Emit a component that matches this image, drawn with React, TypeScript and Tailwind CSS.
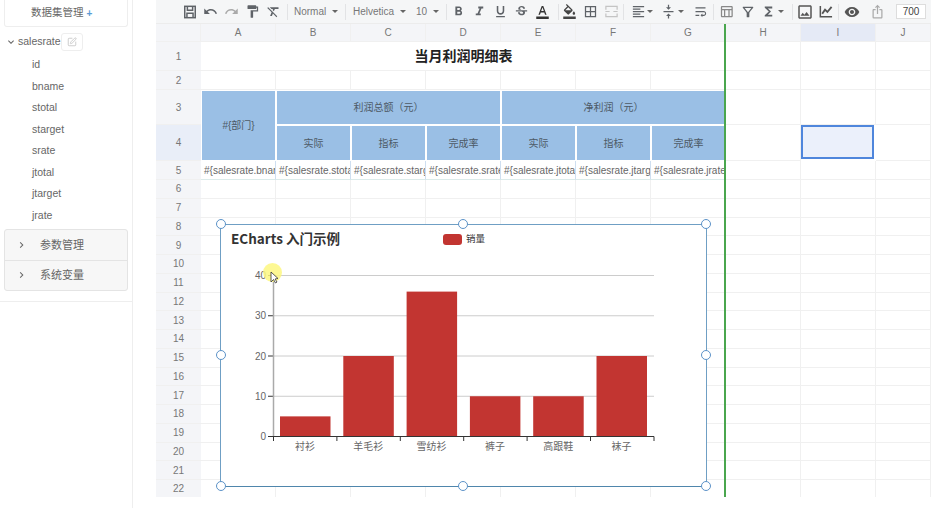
import type { ReactNode } from 'react';
import {
  MdUndo, MdRedo, MdFormatPaint, MdFormatClear, MdFormatBold, MdFormatItalic,
  MdFormatUnderlined, MdStrikethroughS, MdFormatColorText, MdFormatColorFill, MdBorderAll,
  MdFormatAlignLeft, MdVerticalAlignCenter, MdWrapText, MdOutlineTableChart, MdOutlineFilterAlt,
  MdFunctions, MdOutlineImage, MdVisibility, MdOutlineIosShare, MdExpandMore, MdChevronRight,
} from 'react-icons/md';
import { SquarePen } from 'lucide-react';

const FONT = "font-['Liberation_Sans','Noto_Sans_CJK_SC',sans-serif]";
const COLS = ['A', 'B', 'C', 'D', 'E', 'F', 'G', 'H', 'I', 'J'];
const FIELDS = ['id', 'bname', 'stotal', 'starget', 'srate', 'jtotal', 'jtarget', 'jrate'];
const BODY_ROWS = Array.from({ length: 17 }, (_, i) => i + 6);
const BARS = [
  { label: '衬衫', value: 5 }, { label: '羊毛衫', value: 20 }, { label: '雪纺衫', value: 36 },
  { label: '裤子', value: 10 }, { label: '高跟鞋', value: 10 }, { label: '袜子', value: 20 },
];

const Sep = () => <span className="h-[16px] w-px flex-none bg-[#e2e3e5]" />;
const Gap = ({ w }: { w: string }) => <span className={`flex-none ${w}`} />;
const Caret = ({ ml = 'ml-[6px]' }: { ml?: string }) => (
  <span className={`h-0 w-0 flex-none border-x-[3px] border-t-[3px] border-x-transparent border-t-[#666] ${ml}`} />
);

function Tool({ children, w = 'w-[21px]', start }: { children: ReactNode; w?: string; start?: string }) {
  return <span className={`flex h-[23px] flex-none items-center text-[15px] text-[#5f6368] ${start ?? 'justify-center'} ${w}`}>{children}</span>;
}

function Select({ label, w }: { label: string; w: string }) {
  return <span className={`flex flex-none items-center text-[10px] text-[#777] ${w}`}>{label}<Caret /></span>;
}

function SaveIcon() {
  return (
    <svg width="14" height="14" viewBox="0 0 16 16" fill="none" stroke="#5f6368" strokeWidth="1.7">
      <rect x="2" y="1.5" width="12" height="13" />
      <path d="M5 2v4h6V2M4.5 14v-4.5h7V14" />
    </svg>
  );
}

function MergeIcon() {
  return (
    <svg width="15" height="15" viewBox="0 0 16 16" fill="none" stroke="#c4c4c4" strokeWidth="1.3">
      <path d="M2 6V2.5h12V6M2 10v3.5h12V10M1.5 8H6M10 8h4.5" />
    </svg>
  );
}

function LineChartIcon() {
  return (
    <svg width="15" height="15" viewBox="0 0 16 16" fill="none" stroke="#555" strokeWidth="1.6">
      <path d="M2.5 2v11.5H15" />
      <path d="M4.5 10.5 7.5 6l2.5 2.5L14.5 3" strokeWidth="2" />
    </svg>
  );
}

function Toolbar() {
  return (
    <div className="flex h-[24px] items-center border-b border-[#ececec] bg-[#f5f6f7] pl-[23px]">
      <Tool><SaveIcon /></Tool>
      <Tool><MdUndo /></Tool>
      <Tool><MdRedo className="text-[#aaa]" /></Tool>
      <Tool><MdFormatPaint /></Tool>
      <Tool><MdFormatClear /></Tool>
      <Gap w="w-[3px]" /><Sep /><Gap w="w-[6px]" />
      <Select label="Normal" w="w-[51px]" />
      <Sep /><Gap w="w-[7px]" />
      <Select label="Helvetica" w="w-[56px]" />
      <Gap w="w-[7px]" />
      <Select label="10" w="w-[30px]" />
      <Sep /><Gap w="w-[1px]" />
      <Tool><MdFormatBold /></Tool>
      <Tool><MdFormatItalic /></Tool>
      <Tool><MdFormatUnderlined /></Tool>
      <Tool><MdStrikethroughS /></Tool>
      <Tool><MdFormatColorText className="text-[#333]" /></Tool>
      <Gap w="w-[5px]" /><Sep />
      <Tool><MdFormatColorFill className="text-[#444]" /></Tool>
      <Tool><MdBorderAll /></Tool>
      <Tool><MergeIcon /></Tool>
      <Gap w="w-[1px]" /><Sep />
      <Tool w="w-[37px]" start="pl-[7px]"><MdFormatAlignLeft /><Caret ml="ml-[1px]" /></Tool>
      <Tool w="w-[24px]" start=""><MdVerticalAlignCenter /><Caret ml="ml-[2px]" /></Tool>
      <Gap w="w-[5px]" />
      <Tool><MdWrapText /></Tool>
      <Gap w="w-[2px]" /><Sep /><Gap w="w-[2px]" />
      <Tool><MdOutlineTableChart className="text-[#888]" /></Tool>
      <Tool><MdOutlineFilterAlt className="text-[16px]" /></Tool>
      <Tool w="w-[26px]" start="pl-[3px]"><MdFunctions /><Caret ml="ml-[2px]" /></Tool>
      <Gap w="w-[8px]" /><Sep /><Gap w="w-[1px]" />
      <Tool><MdOutlineImage className="text-[18px] text-[#555]" /></Tool>
      <Tool w="w-[20px]"><LineChartIcon /></Tool>
      <Gap w="w-[3px]" /><Sep /><Gap w="w-[2px]" />
      <Tool><MdVisibility className="text-[16px] text-[#555]" /></Tool>
      <Gap w="w-[5px]" />
      <Tool><MdOutlineIosShare className="text-[#aaa]" /></Tool>
      <Gap w="w-[8px]" />
      <span className="flex h-[15px] w-[30px] flex-none items-center justify-center border border-[#ddd] bg-white text-[10px] text-[#444]">700</span>
    </div>
  );
}

function Cell({ className = '', children }: { className?: string; children?: ReactNode }) {
  return <div className={`overflow-hidden whitespace-nowrap border-b border-r border-[#f0f0f0] bg-white ${className}`}>{children}</div>;
}

function Blue({ className = '', children }: { className?: string; children: ReactNode }) {
  return <div className={`flex items-center justify-center border border-white bg-[#9abfe5] text-[10px] text-[#4d5a66] ${className}`}>{children}</div>;
}

function RowHead({ n, active }: { n: number; active?: boolean }) {
  return <div className={`flex items-center justify-center border-b border-[#f0f0f0] text-[10px] text-[#777] ${active ? 'bg-[#e9eef8]' : 'bg-[#f4f5f8]'}`}>{n}</div>;
}

function Sheet() {
  return (
    <div className="grid grid-cols-[45px_repeat(9,75px)_55px] grid-rows-[18px_29px_19px_35px_36px_19px_repeat(17,18.75px)]">
      <div className="border-b border-r border-[#f0f0f0] bg-[#f4f5f8]" />
      {COLS.map(c => (
        <div key={c} className={`flex items-center justify-center border-b border-r border-[#f0f0f0] text-[10px] text-[#777] ${c === 'I' ? 'bg-[#e5eaf6]' : 'bg-[#f4f5f8]'}`}>{c}</div>
      ))}

      <RowHead n={1} />
      <Cell className="col-span-7 flex items-center justify-center pl-[1px] text-[14px] font-bold text-[#222]">当月利润明细表</Cell>
      <Cell /><Cell /><Cell />

      <RowHead n={2} />
      {COLS.map(c => <Cell key={c} />)}

      <RowHead n={3} />
      <Blue className="row-span-2">#{'{'}部门{'}'}</Blue>
      <Blue className="col-span-3">利润总额（元）</Blue>
      <Blue className="col-span-3">净利润（元）</Blue>
      <Cell /><Cell /><Cell />

      <RowHead n={4} active />
      {['实际', '指标', '完成率', '实际', '指标', '完成率'].map((t, i) => <Blue key={i}>{t}</Blue>)}
      <Cell />
      <div className="mb-[2px] mr-[2px] border-2 border-[#4f86dc] bg-[#ebf0fb]" />
      <Cell />

      <RowHead n={5} />
      {['bname', 'stotal', 'starget', 'srate', 'jtotal', 'jtarget', 'jrate'].map(f => (
        <Cell key={f} className="border-b-[#dcebea] border-r-[#cfdff0] pl-[3px] pt-[3px] text-[10px] leading-[13px] text-[#666]">#{'{'}salesrate.{f}{'}'}</Cell>
      ))}
      <Cell /><Cell /><Cell />

      {BODY_ROWS.map(n => [
        <RowHead key={n} n={n} />,
        ...COLS.map(c => <Cell key={n + c} />),
      ])}
    </div>
  );
}

function Chart() {
  const y = (v: number) => 211.5 - v * 4.025;
  return (
    <div className="absolute left-[64px] top-[200px] h-[263px] w-[487px] border border-[#6f9fc4] border-b-[#4f86ac] bg-white">
      <svg width="485" height="261" viewBox="0 0 485 261" className="block">
        <text x="10" y="19" fontSize="13.5" fontWeight="700" fill="#333" className="font-['Noto_Sans_CJK_SC']">ECharts 入门示例</text>
        <rect x="222" y="9" width="19" height="11" rx="3" fill="#c23531" />
        <text x="245" y="17" fontSize="9.5" fill="#333">销量</text>
        {[0, 10, 20, 30, 40].map(v => (
          <g key={v}>
            {v > 0 && <line x1="52" x2="433" y1={y(v)} y2={y(v)} stroke="#ccc" />}
            <line x1="47" x2="52" y1={y(v)} y2={y(v)} stroke="#333" />
            <text x="45" y={y(v) + 3.5} fontSize="10" fill="#666" textAnchor="end">{v}</text>
          </g>
        ))}
        {BARS.map((b, i) => (
          <g key={b.label}>
            <rect x={59 + i * 63.3} y={y(b.value)} width="50.5" height={b.value * 4.025} fill="#c23531" />
            <line x1={52.5 + i * 63.4} x2={52.5 + i * 63.4} y1="211.5" y2="216" stroke="#333" />
            <text x={84 + i * 63.3} y="225" fontSize="10" fill="#666" textAnchor="middle">{b.label}</text>
          </g>
        ))}
        <line x1="433" x2="433" y1="211.5" y2="216" stroke="#333" />
        <line x1="52.5" x2="52.5" y1={y(40)} y2="211.5" stroke="#aaa" strokeWidth="1.5" />
        <line x1="47" x2="433" y1="211.5" y2="211.5" stroke="#333" />
        <circle cx="51.5" cy="47.5" r="9.5" fill="#fdf780" fillOpacity="0.85" />
        <path d="M50 47 L50 57 L52.5 54.5 L54.5 58 L56 57 L54 54 L57 53.5 Z" fill="#fff" stroke="#333" strokeWidth="0.8" />
      </svg>
    </div>
  );
}

function Handle({ className }: { className: string }) {
  return <span className={`absolute h-[10px] w-[10px] rounded-full border border-[#5b92c8] bg-white ${className}`} />;
}

function Sidebar() {
  return (
    <div className="h-full w-[133px] flex-none border-r border-[#eeeeee]">
      <div className="h-[302px] border-b border-[#eeeeee] px-[4px]">
        <div className="flex h-[27px] items-center rounded-b-[3px] border border-t-0 border-[#eeeeee] pl-[26px] text-[10.5px] text-[#666]">
          数据集管理<span className="ml-[3px] text-[10px] font-bold text-[#5b9bd5]">+</span>
        </div>
        <div className="mt-[6px] flex h-[17px] items-center text-[10.5px] text-[#666]">
          <MdExpandMore className="mr-[0px] w-[14px] flex-none text-[12px]" />
          salesrate
          <span className="flex h-[18px] w-[22px] items-center justify-center rounded-[3px] border border-[#eeeeee] bg-white text-[#c4c4c4]">
            <SquarePen size={10} />
          </span>
        </div>
        <div className="mt-[4px] pl-[28px]">
          {FIELDS.map(f => <div key={f} className="flex h-[21.6px] items-center text-[10.5px] text-[#666]">{f}</div>)}
        </div>
        <div className="mt-[2px] rounded-[3px] border border-[#e4e4e4] bg-[#f7f7f7]">
          {['参数管理', '系统变量'].map((t, i) => (
            <div key={t} className={`flex h-[30px] items-center pl-[10px] text-[11px] text-[#666] ${i ? 'border-t border-[#e4e4e4]' : ''}`}>
              <MdChevronRight className="mr-[12px] w-[13px] flex-none text-[12px]" />{t}
            </div>
          ))}
        </div>
      </div>
    </div>
  );
}

export default function App() {
  return (
    <div className={`flex h-[508px] w-[951px] overflow-hidden bg-white ${FONT}`}>
      <Sidebar />
      <div className="ml-[23px] h-[497px] w-[775px] flex-none overflow-hidden">
        <Toolbar />
        <div className="relative">
          <Sheet />
          <Chart />
          <Handle className="left-[60px] top-[195px]" />
          <Handle className="left-[302px] top-[195px]" />
          <Handle className="left-[545px] top-[195px]" />
          <Handle className="left-[60px] top-[326px]" />
          <Handle className="left-[545px] top-[326px]" />
          <Handle className="left-[60px] top-[457px]" />
          <Handle className="left-[302px] top-[457px]" />
          <Handle className="left-[545px] top-[457px]" />
          <div className="absolute bottom-0 left-[568px] top-0 w-[2px] bg-[#4aa64e]" />
        </div>
      </div>
    </div>
  );
}
